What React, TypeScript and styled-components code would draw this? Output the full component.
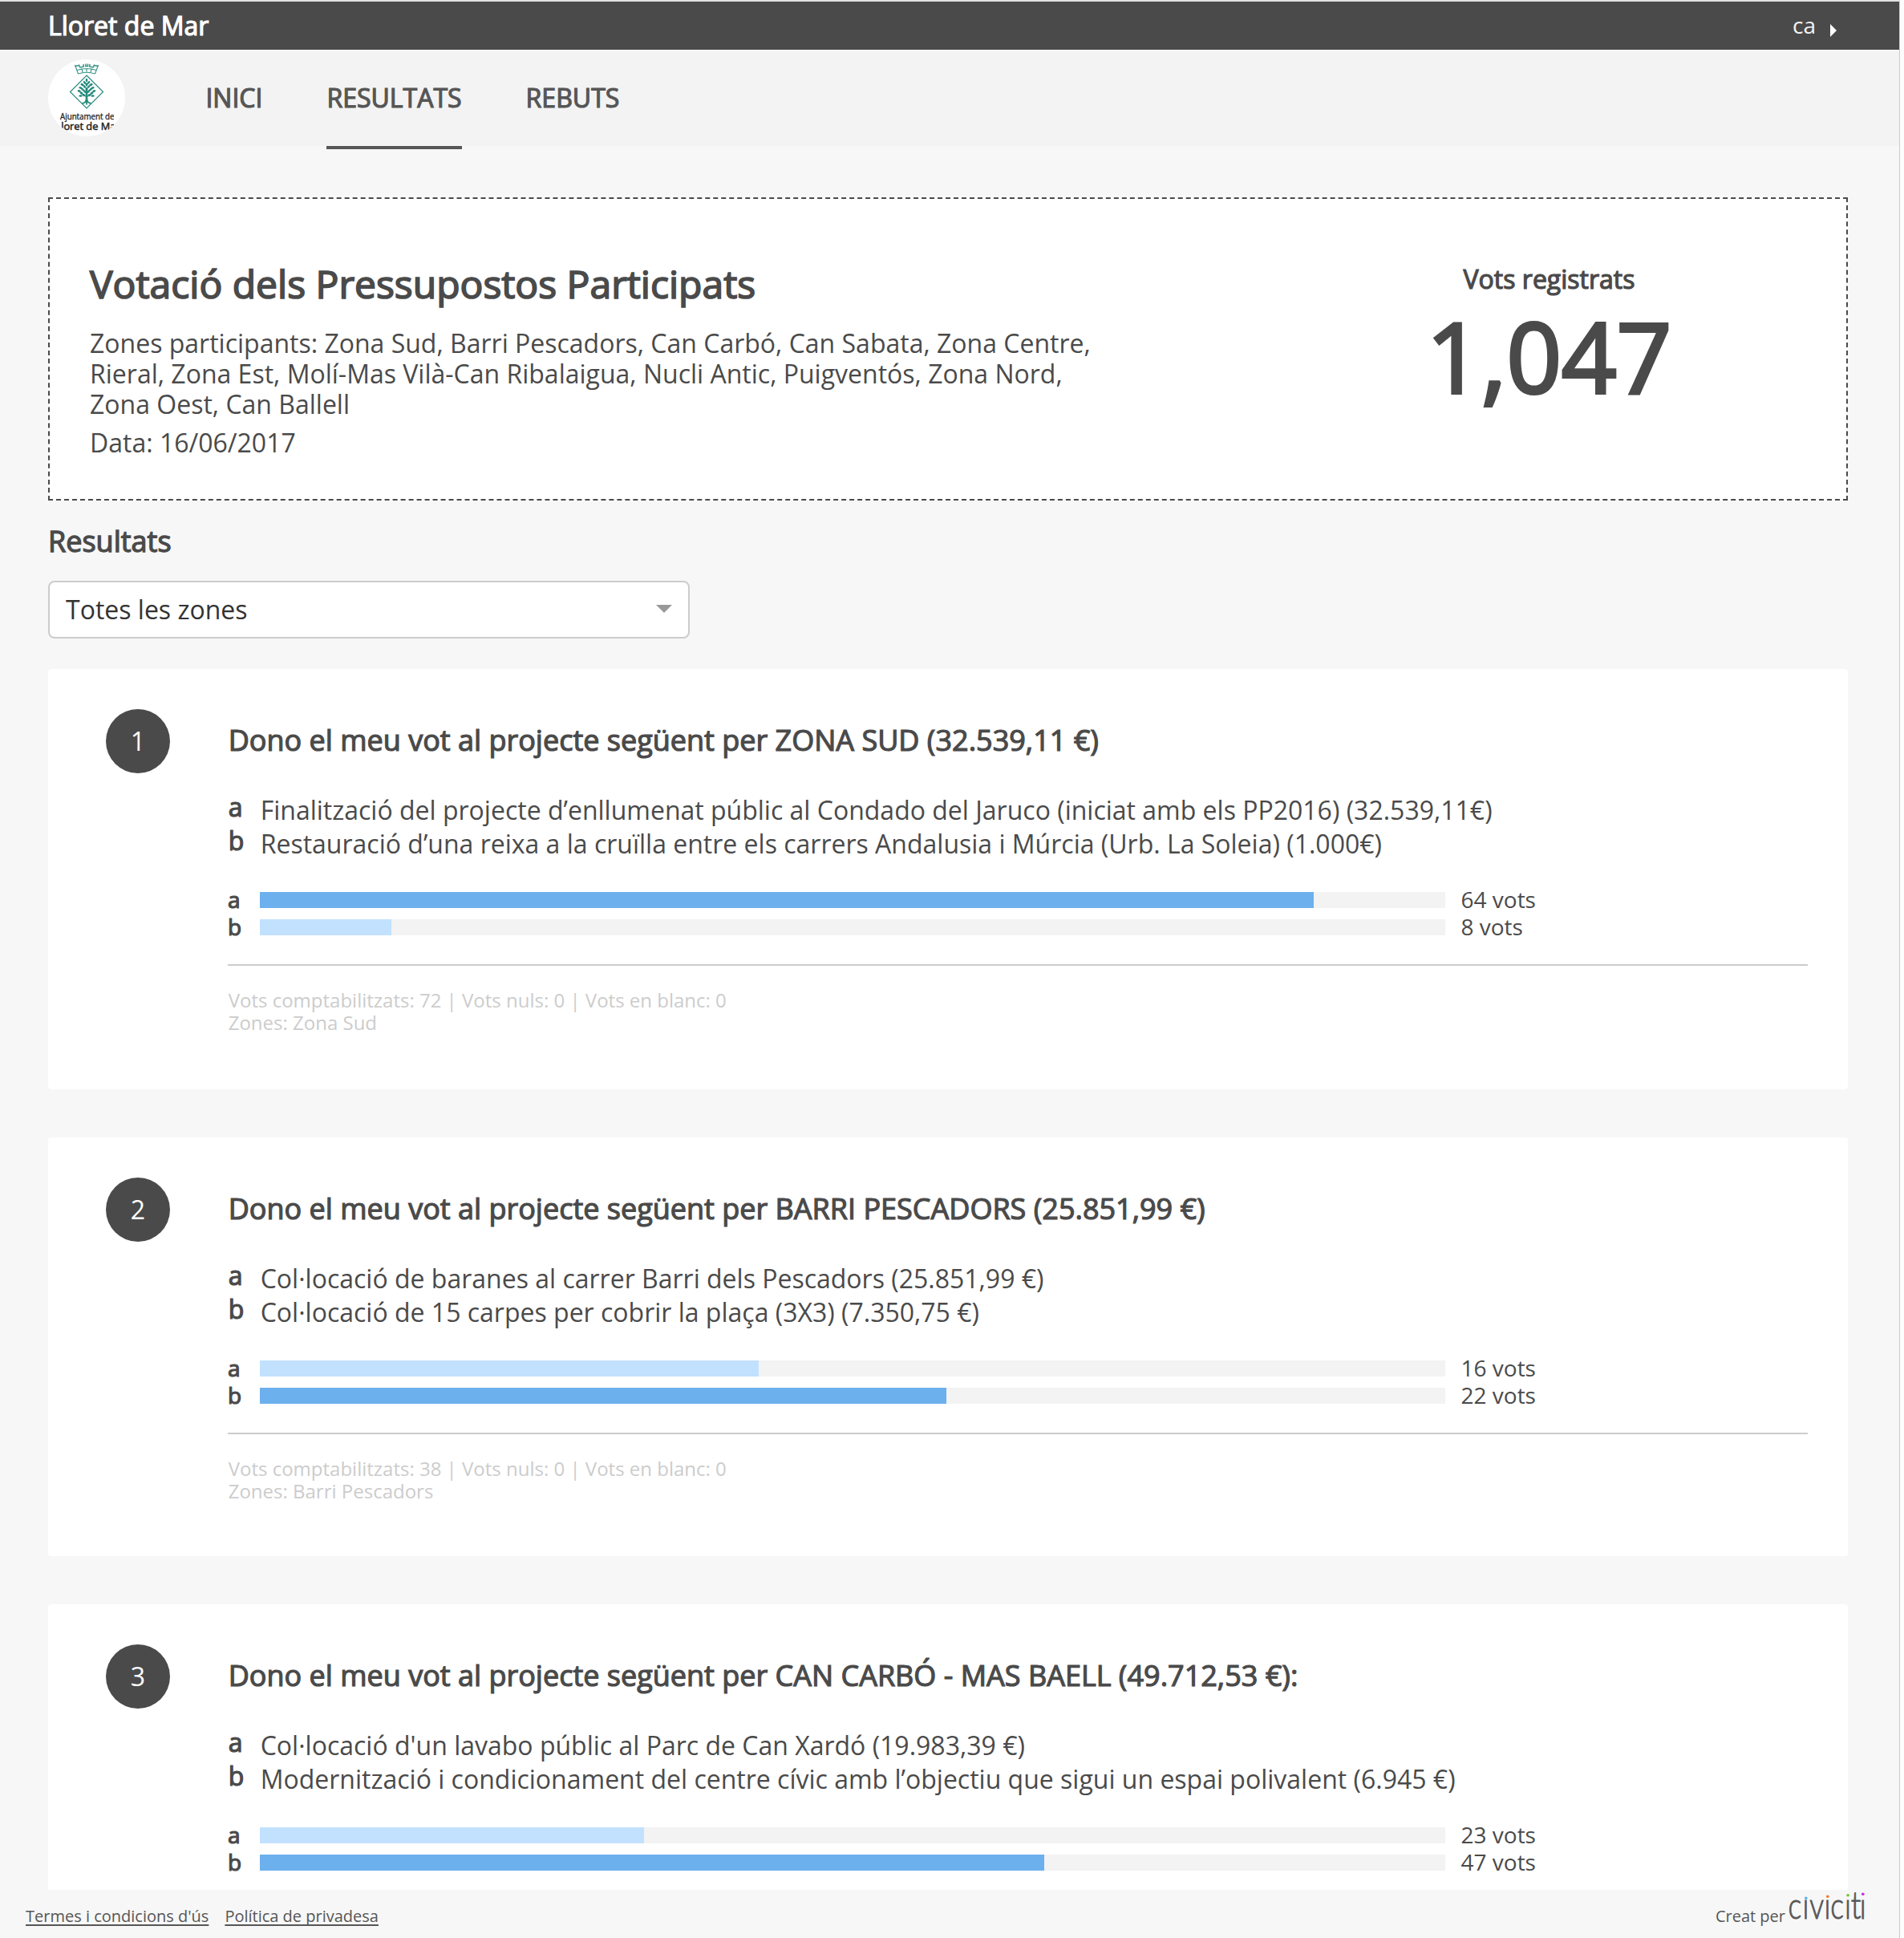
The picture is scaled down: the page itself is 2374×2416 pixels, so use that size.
import React from "react";
import styled, { createGlobalStyle, css } from "styled-components";

const GlobalStyle = createGlobalStyle`
  * { box-sizing: border-box; }
  body { margin: 0; background: #fcfcfc; font-family: "Open Sans", "Noto Sans", sans-serif; color: #4a4a4a; }
  h1, h2, p, ul { margin: 0; padding: 0; }
`;

/* Regular face thickened by a stroke, so widths stay those of the regular weight */
const emphasis = css<{ $stroke?: number }>`
  font-weight: 400;
  -webkit-text-stroke: ${(p) => p.$stroke ?? 1.2}px currentColor;
`;

const Page = styled.div`
  width: 2369px;
  height: 2416px;
  display: flex;
  flex-direction: column;
  overflow: hidden;
  background: #f7f7f7;
  border-top: 2px solid #dfe1e3;
  border-right: 1px solid #ccc;
`;

const TopBar = styled.div`
  flex: none;
  height: 60px;
  padding: 0 78px 0 60px;
  display: flex;
  justify-content: space-between;
  background: #4a4a4a;
  color: #fff;
`;

const Town = styled.div`
  ${emphasis}
  font-size: 32px;
  line-height: 60px;
`;

const Language = styled.div`
  display: flex;
  gap: 18px;
  font-size: 28px;
  line-height: 59px;
  color: #f3f3f3;
`;

const LanguageArrow = styled.span`
  margin-top: 28px;
  height: 0;
  border: 8px solid transparent;
  border-left-color: #fff;
  border-right-width: 0;
`;

const Header = styled.header`
  flex: none;
  height: 120px;
  border-top: 2px solid #f8f8f8;
  padding-left: 60px;
  display: flex;
  gap: 100.4px;
  background: #f3f3f3;
`;

const Crest = styled.svg`
  width: 96px;
  height: 96px;
  margin-top: 10px;
`;

const Nav = styled.nav`
  display: flex;
  gap: 80px;
`;

const NavItem = styled.a<{ $active?: boolean }>`
  ${emphasis}
  font-size: 32px;
  line-height: 116px;
  height: 122px;
  color: #565656;
  border-bottom: 4px solid ${(p) => (p.$active ? "#565656" : "transparent")};
`;

const Main = styled.main`
  height: 2174px;
  overflow: hidden;
  padding: 64px 64px 0 60px;
`;

const Summary = styled.section`
  height: 378px;
  padding: 46px 0 0 50px;
  border: 2px dashed #4a4a4a;
  background: #fff;
  display: flex;
  justify-content: space-between;
`;

const SummaryText = styled.div`
  width: 1280px;
  font-size: 32px;
  line-height: 38px;
`;

const Title = styled.h1`
  ${emphasis}
  font-size: 48px;
  line-height: 66px;
  margin: 27px 0 22px;
`;

const Zones = styled.p`
  margin-bottom: 10px;
`;

const Tally = styled.div`
  flex: none;
  width: 741px;
  text-align: center;
`;

const TallyLabel = styled.div`
  ${emphasis}
  font-size: 32px;
  line-height: 44px;
  margin-top: 32px;
`;

const TallyCount = styled.div`
  ${emphasis}
  font-size: 120px;
  line-height: 128px;
  margin-top: 10px;
`;

const SectionTitle = styled.h2`
  ${emphasis}
  font-size: 36px;
  line-height: 50px;
  margin-top: 26px;
`;

const Select = styled.div`
  width: 800px;
  height: 72px;
  margin: 24px 0 38px;
  padding: 0 20px;
  display: flex;
  align-items: center;
  justify-content: space-between;
  border: 2px solid #ccc;
  border-radius: 8px;
  background: #fff;
  color: #333;
  font-size: 32px;
  line-height: 44px;
`;

const SelectArrow = styled.span`
  border: 10px solid transparent;
  border-top-color: #999;
  border-bottom-width: 0;
  margin-top: -2px;
`;

const Card = styled.article`
  height: 524px;
  margin-bottom: 60px;
  padding: 50px 50px 0 72px;
  display: flex;
  gap: 72px;
  border-radius: 4px;
  background: #fff;

  &:nth-of-type(even) {
    height: 522px;
  }
`;

const Badge = styled.div`
  flex: none;
  width: 80px;
  height: 80px;
  border-radius: 50%;
  background: #4a4a4a;
  color: #fff;
  font-size: 32px;
  line-height: 80px;
  text-align: center;
`;

const CardBody = styled.div`
  flex: 1;
`;

const Question = styled.h2`
  ${emphasis}
  font-size: 36px;
  line-height: 50px;
  margin: 14px 0 41px;
  padding-left: 0.7px;
`;

const Option = styled.div`
  display: flex;
  height: 42px;
  padding-left: 0.7px;
  font-size: 32px;
  line-height: 42px;
  white-space: nowrap;
`;

const OptionKey = styled.span`
  ${emphasis}
  width: 40px;
  line-height: 34px;
`;

const Bars = styled.div`
  display: flex;
  flex-direction: column;
  margin-top: 32px;
`;

const BarRow = styled.div`
  display: flex;
  height: 34px;
  font-size: 28px;
  line-height: 32px;
`;

const BarKey = styled.span`
  ${emphasis}
  width: 40px;
`;

const Track = styled.div`
  width: 1478px;
  height: 20px;
  margin: 7px 19.5px 7px 0;
  background: #f3f3f3;
`;

const Fill = styled.div<{ $leading: boolean }>`
  height: 20px;
  background: ${(p) => (p.$leading ? "#6cb0ee" : "#c2e1ff")};
`;

const Stats = styled.div`
  margin-top: 29px;
  padding: 29px 0 0 0.7px;
  border-top: 2px solid #ccc;
  font-size: 24px;
  line-height: 28px;
  color: #ccc;
`;

const Footer = styled.footer`
  flex: none;
  height: 60px;
  padding: 0 40px 0 32px;
  display: flex;
  justify-content: space-between;
  font-size: 20px;
  line-height: 65px;
  color: #565656;
`;

const FooterLinks = styled.div`
  display: flex;
  gap: 20px;
`;

const FooterLink = styled.a`
  text-decoration: underline;
  text-decoration-thickness: 2px;
  text-underline-offset: 3px;
  text-decoration-skip-ink: none;
`;

const Credit = styled.div`
  display: flex;
  gap: 4px;
`;

const Brand = styled.svg`
  width: 98px;
  height: 44px;
  overflow: visible;
`;

type Choice = { key: string; text: string; votes: number };
type Result = { title: string; zone?: string; total: number; choices: Choice[] };

const results: Result[] = [
  {
    title: "Dono el meu vot al projecte següent per ZONA SUD (32.539,11 €)",
    zone: "Zona Sud",
    total: 72,
    choices: [
      { key: "a", text: "Finalització del projecte d’enllumenat públic al Condado del Jaruco (iniciat amb els PP2016) (32.539,11€)", votes: 64 },
      { key: "b", text: "Restauració d’una reixa a la cruïlla entre els carrers Andalusia i Múrcia (Urb. La Soleia) (1.000€)", votes: 8 },
    ],
  },
  {
    title: "Dono el meu vot al projecte següent per BARRI PESCADORS (25.851,99 €)",
    zone: "Barri Pescadors",
    total: 38,
    choices: [
      { key: "a", text: "Col·locació de baranes al carrer Barri dels Pescadors (25.851,99 €)", votes: 16 },
      { key: "b", text: "Col·locació de 15 carpes per cobrir la plaça (3X3) (7.350,75 €)", votes: 22 },
    ],
  },
  {
    title: "Dono el meu vot al projecte següent per CAN CARBÓ - MAS BAELL (49.712,53 €):",
    total: 71,
    choices: [
      { key: "a", text: "Col·locació d'un lavabo públic al Parc de Can Xardó (19.983,39 €)", votes: 23 },
      { key: "b", text: "Modernització i condicionament del centre cívic amb l’objectiu que sigui un espai polivalent (6.945 €)", votes: 47 },
    ],
  },
];

/* Leaves of the crest's tree: x, y, tilt */
const leaves: [number, number, number][] = [
  [48, 26, 90], [45.5, 29, 50], [50.5, 29, -50], [42.5, 31.5, 30], [53.5, 31.5, -30], [48, 31.5, 90],
  [45.3, 34, 50], [50.7, 34, -50], [40.5, 35.5, 20], [55.5, 35.5, -20], [43, 37.5, 40], [53, 37.5, -40],
  [48, 37, 90], [38.8, 39.5, 20], [57.2, 39.5, -20], [45.5, 40, 50], [50.5, 40, -50], [41.5, 42, 30],
  [54.5, 42, -30], [40.5, 45.5, 0], [55.5, 45.5, 0], [44.5, 44.5, 30], [51.5, 44.5, -30],
];

function TownCrest() {
  return (
    <Crest viewBox="0 0 96 96">
      <defs>
        <clipPath id="crest-disc"><circle cx="48" cy="48" r="48" /></clipPath>
        <clipPath id="crest-words"><rect x="14" y="60" width="68" height="29.5" /></clipPath>
      </defs>
      <circle cx="48" cy="48" r="48" fill="#fff" />
      <g fill="none" stroke="#3a9588" strokeWidth="1.1">
        <path d="M37.5 18 Q48 14.5 58.5 18 M36 13.5 Q48 9.5 60 13.5 M33.5 7 L37.5 18 M62.5 7 L58.5 18 M42 12 L43 16 M48 11 V15.5 M54 12 L53 16" />
        <path strokeWidth="1.5" d="M33.5 8.5 L38 7.5 M39.5 10 L44.5 9 M46 8.5 H50 M51.5 9 L56.5 10 M58 7.5 L62.5 8.5 M38.5 6.5 L39.5 10 M44 6 L44.5 9.5 M47 5.5 V8.5 M49.5 5.5 V8.5 M52 6 L51.5 9.5 M57.5 6.5 L56.5 10" />
      </g>
      <g fill="none" stroke="#258a7c" strokeWidth="1.2">
        <path d="M48 20 L68.5 40.5 L48 61 L27.5 40.5 Z" />
        <path strokeWidth="2.6" d="M48 36 V53" />
        <path strokeWidth="1.8" d="M47.5 50 Q47.5 54 42.5 55 M48.5 50 Q48.5 54 53.5 55 M48 50 V56.5" />
        <path strokeWidth="1" d="M48 47 L42 43 M48 47 L54 43" />
      </g>
      <g fill="#258a7c">
        {leaves.map(([x, y, tilt]) => (
          <ellipse key={`${x}-${y}`} cx={x} cy={y} rx="2.2" ry="1.35" transform={`rotate(${tilt} ${x} ${y})`} />
        ))}
      </g>
      <g clipPath="url(#crest-disc)">
        <g clipPath="url(#crest-words)" fill="#222" stroke="#222" fontFamily='"Open Sans", sans-serif'>
          <text x="15" y="74.8" fontSize="10" strokeWidth="0.3" textLength="67.5" lengthAdjust="spacingAndGlyphs">Ajuntament de</text>
          <text x="9.5" y="88.2" fontSize="13" strokeWidth="0.5" textLength="80" lengthAdjust="spacingAndGlyphs">Lloret de Mar</text>
        </g>
      </g>
    </Crest>
  );
}

function CivicitiBrand() {
  return (
    <Brand viewBox="0 0 98 44">
      <text
        transform="scale(0.79 1)"
        x="-0.5 22.2 33.3 56.3 66.2 88.6"
        y="35.5"
        fill="#565656"
        stroke="#565656"
        strokeWidth="0.9"
        fontFamily="Lato, sans-serif"
        fontWeight="300"
        fontSize="45"
      >
        cıvıcı<tspan x="98.3" fontSize="47">t</tspan><tspan x="112.5">ı</tspan>
      </text>
      <circle cx="21.8" cy="10.3" r="1.8" fill="#5aaef2" />
      <circle cx="48.8" cy="8.3" r="1.8" fill="#f2762e" />
      <circle cx="74.1" cy="6.7" r="1.8" fill="#6cc62c" />
      <circle cx="92.8" cy="5.3" r="1.8" fill="#c22ae0" />
    </Brand>
  );
}

function ResultCard({ index, result }: { index: number; result: Result }) {
  const top = Math.max(...result.choices.map((c) => c.votes));
  return (
    <Card>
      <Badge>{index}</Badge>
      <CardBody>
        <Question>{result.title}</Question>
        {result.choices.map((c) => (
          <Option key={c.key}>
            <OptionKey>{c.key}</OptionKey>
            <span>{c.text}</span>
          </Option>
        ))}
        <Bars>
          {result.choices.map((c) => (
            <BarRow key={c.key}>
              <BarKey>{c.key}</BarKey>
              <Track>
                <Fill $leading={c.votes === top} style={{ width: `${(c.votes / result.total) * 100}%` }} />
              </Track>
              <span>{c.votes} vots</span>
            </BarRow>
          ))}
        </Bars>
        {result.zone && (
          <Stats>
            <p>Vots comptabilitzats: {result.total} | Vots nuls: 0 | Vots en blanc: 0</p>
            <p>Zones: {result.zone}</p>
          </Stats>
        )}
      </CardBody>
    </Card>
  );
}

export default function App() {
  return (
    <>
      <GlobalStyle />
      <Page>
        <TopBar>
          <Town>Lloret de Mar</Town>
          <Language>ca<LanguageArrow /></Language>
        </TopBar>
        <Header>
          <TownCrest />
          <Nav>
            <NavItem>INICI</NavItem>
            <NavItem $active>RESULTATS</NavItem>
            <NavItem>REBUTS</NavItem>
          </Nav>
        </Header>
        <Main>
          <Summary>
            <SummaryText>
              <Title $stroke={1.7}>Votació dels Pressupostos Participats</Title>
              <Zones>
                Zones participants: Zona Sud, Barri Pescadors, Can Carbó, Can Sabata, Zona Centre, Rieral, Zona Est,
                Molí-Mas Vilà-Can Ribalaigua, Nucli Antic, Puigventós, Zona Nord, Zona Oest, Can Ballell
              </Zones>
              <p>Data: 16/06/2017</p>
            </SummaryText>
            <Tally>
              <TallyLabel>Vots registrats</TallyLabel>
              <TallyCount $stroke={4}>1,047</TallyCount>
            </Tally>
          </Summary>
          <SectionTitle $stroke={1.3}>Resultats</SectionTitle>
          <Select>Totes les zones<SelectArrow /></Select>
          {results.map((result, i) => (
            <ResultCard key={result.title} index={i + 1} result={result} />
          ))}
        </Main>
        <Footer>
          <FooterLinks>
            <FooterLink>Termes i condicions d'ús</FooterLink>
            <FooterLink>Política de privadesa</FooterLink>
          </FooterLinks>
          <Credit>Creat per<CivicitiBrand /></Credit>
        </Footer>
      </Page>
    </>
  );
}
